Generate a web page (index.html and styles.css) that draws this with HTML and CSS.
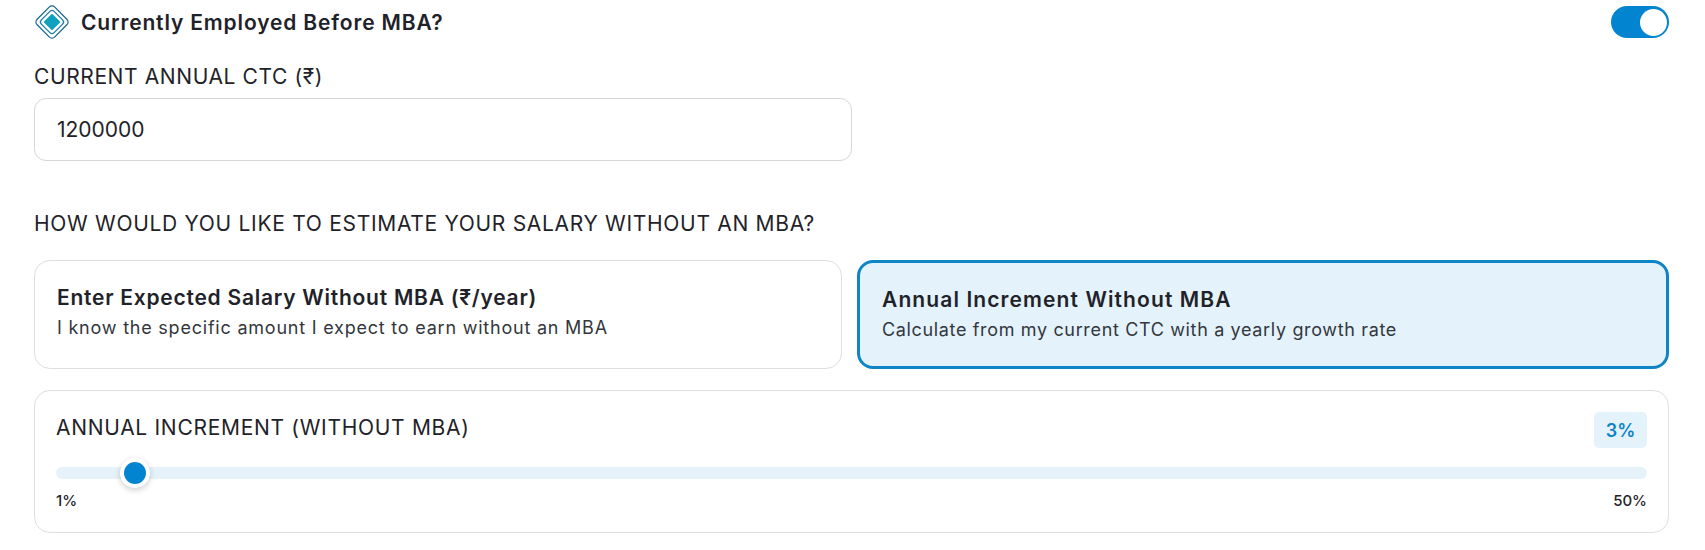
FILE: index.html
```html
<!doctype html>
<html lang="en">
<head>
    <meta charset="UTF-8">
    <meta name="viewport" content="width=device-width, initial-scale=1.0">
    <link rel="stylesheet" href="styles.css">
    <title>Salary estimate</title>
</head>
<body>
    <div class="container">
        <div class="employed-row">
            <div class="employed-title">
                <svg class="diamond" viewBox="0 0 36 36" width="36" height="36" fill="none">
                    <rect x="5.5" y="5.5" width="25" height="25" rx="4" transform="rotate(45 18 18)" stroke="#1d6a8f" stroke-width="1.3"/>
                    <rect x="9" y="9" width="18" height="18" rx="3" transform="rotate(45 18 18)" stroke="#1d7ea5" stroke-width="1.3"/>
                    <rect x="12" y="12" width="12" height="12" rx="1" transform="rotate(45 18 18)" fill="#12a0bf"/>
                </svg>
                <h2>Currently Employed Before MBA?</h2>
            </div>
            <span class="toggle"><span class="knob"></span></span>
        </div>

        <label class="field-label ctc-label" for="ctc">CURRENT ANNUAL CTC (₹)</label>
        <input class="ctc-input" id="ctc" type="text" value="1200000">

        <div class="field-label method-label">HOW WOULD YOU LIKE TO ESTIMATE YOUR SALARY WITHOUT AN MBA?</div>

        <div class="methods">
            <div class="method">
                <h3>Enter Expected Salary Without MBA (₹/year)</h3>
                <p>I know the specific amount I expect to earn without an MBA</p>
            </div>
            <div class="method selected">
                <h3>Annual Increment Without MBA</h3>
                <p>Calculate from my current CTC with a yearly growth rate</p>
            </div>
        </div>

        <div class="slider-panel">
            <div class="slider-head">
                <span class="field-label">ANNUAL INCREMENT (WITHOUT MBA)</span>
                <span class="badge">3%</span>
            </div>
            <input class="slider" type="range" min="1" max="50" value="3">
            <div class="slider-scale">
                <span>1%</span>
                <span>50%</span>
            </div>
        </div>
    </div>
</body>
</html>
```

FILE: styles.css
```css
body {
    margin: 0;
    background-color: #fff;
    color: #1f2329;
    font-family: Inter, "Liberation Sans", sans-serif;
}

.container {
    padding: 4px 36px 0 34px;
}

.employed-row {
    display: flex;
    align-items: center;
    justify-content: space-between;
    height: 36px;
}

.employed-title {
    display: flex;
    align-items: center;
    gap: 11px;
}

.employed-title h2 {
    margin: 0;
    font-size: 21px;
    font-weight: 600;
    letter-spacing: 0.85px;
}

.diamond {
    display: block;
}

.toggle {
    display: flex;
    align-items: center;
    justify-content: flex-end;
    box-sizing: border-box;
    width: 58px;
    height: 32px;
    padding-right: 2px;
    border-radius: 16px;
    background-color: #0284d0;
}

.knob {
    width: 27px;
    height: 27px;
    border-radius: 50%;
    background-color: #fff;
}

.field-label {
    font-size: 21px;
    font-weight: 400;
    line-height: 24px;
    letter-spacing: 0.7px;
}

.ctc-label {
    display: block;
    margin-top: 25px;
    letter-spacing: 0.6px;
}

.ctc-input {
    display: block;
    box-sizing: border-box;
    width: 818px;
    height: 63px;
    margin-top: 9px;
    padding: 0 22px;
    border: 1px solid #d4d6d9;
    border-radius: 12px;
    color: #1f2329;
    font-family: inherit;
    font-size: 21px;
    outline: none;
}

.method-label {
    margin-top: 51px;
}

.methods {
    display: grid;
    grid-template-columns: 808px 812px;
    gap: 15px;
    margin-top: 24px;
}

.method {
    box-sizing: border-box;
    height: 109px;
    padding: 24px 22px 0;
    border: 1px solid #dedfe2;
    border-radius: 16px;
}

.method h3 {
    margin: 0;
    font-size: 21px;
    font-weight: 600;
    line-height: 26px;
    letter-spacing: 0.75px;
}

.method p {
    margin: 5px 0 0;
    font-size: 18px;
    line-height: 24px;
    letter-spacing: 0.78px;
    color: #33373d;
}

.method.selected {
    padding: 24px 22px 0;
    border: 3px solid #0f84c6;
    background-color: #e4f2fb;
}

.method.selected h3 {
    letter-spacing: 1.1px;
}

.method.selected p {
    letter-spacing: 0.65px;
}

.slider-panel {
    box-sizing: border-box;
    height: 143px;
    margin-top: 21px;
    padding: 21px 21px 0 21px;
    border: 1px solid #dedfe2;
    border-radius: 16px;
}

.slider-head {
    display: flex;
    align-items: flex-start;
    justify-content: space-between;
}

.slider-head .field-label {
    margin-top: 4px;
}

.badge {
    display: flex;
    align-items: center;
    justify-content: center;
    width: 53px;
    height: 36px;
    border-radius: 5px;
    background-color: #e4f2fb;
    color: #0f84c6;
    font-size: 18px;
    font-weight: 600;
}

.slider {
    display: block;
    width: 100%;
    height: 30px;
    margin: 10px 0 0;
    background: transparent;
    -webkit-appearance: none;
    appearance: none;
}

.slider::-webkit-slider-runnable-track {
    height: 12px;
    border-radius: 6px;
    background-color: #e6f2fa;
}

.slider::-webkit-slider-thumb {
    box-sizing: border-box;
    width: 30px;
    height: 30px;
    margin-top: -9px;
    border: 4px solid #fff;
    border-radius: 50%;
    background-color: #0284d0;
    box-shadow: 0 2px 6px rgba(0, 0, 0, 0.2);
    -webkit-appearance: none;
}

.slider-scale {
    display: flex;
    justify-content: space-between;
    margin-top: 3px;
    font-size: 15px;
    font-weight: 500;
}
```
